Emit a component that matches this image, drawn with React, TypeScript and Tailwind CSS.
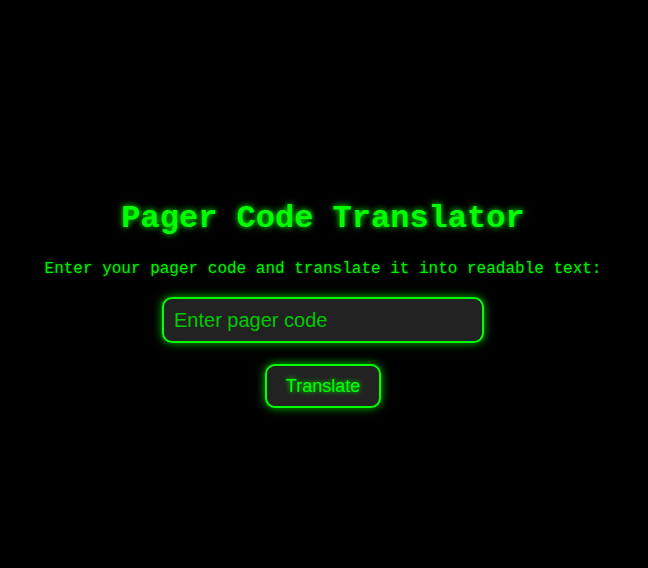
export default function App() {
  return (
    <div className="min-h-[568px] bg-black flex flex-col items-center pt-[199px] pr-[2px] font-['Liberation_Mono','Courier_New',monospace]">
      {/* Title */}
      <h1 className="text-[32px] leading-[40px] font-bold text-[#00ff00] [text-shadow:0_0_6px_#00ff00]">
        Pager Code Translator
      </h1>
      <p className="mt-[18px] text-[16px] leading-[24px] text-[#00ee00] [text-shadow:0_0_3px_rgba(0,255,0,0.4)]">
        Enter your pager code and translate it into readable text:
      </p>

      {/* Input */}
      <input
        type="text"
        placeholder="Enter pager code"
        className="mt-[16px] w-[322px] h-[46px] px-[10px] rounded-[10px] border-2 border-[#00ff00] bg-[#222222] text-[20px] text-[#00ff00] placeholder:text-[#00c800] font-['Liberation_Sans',Arial,sans-serif] outline-none shadow-[0_0_10px_rgba(0,255,0,0.75)]"
      />

      <button className="mt-[21px] w-[116px] h-[44px] rounded-[10px] border-2 border-[#00ff00] bg-[#222222] text-[18px] text-[#00ff00] font-['Liberation_Sans',Arial,sans-serif] [text-shadow:0_0_5px_#00ff00] shadow-[0_0_10px_rgba(0,255,0,0.75)]">
        Translate
      </button>
    </div>
  )
}
